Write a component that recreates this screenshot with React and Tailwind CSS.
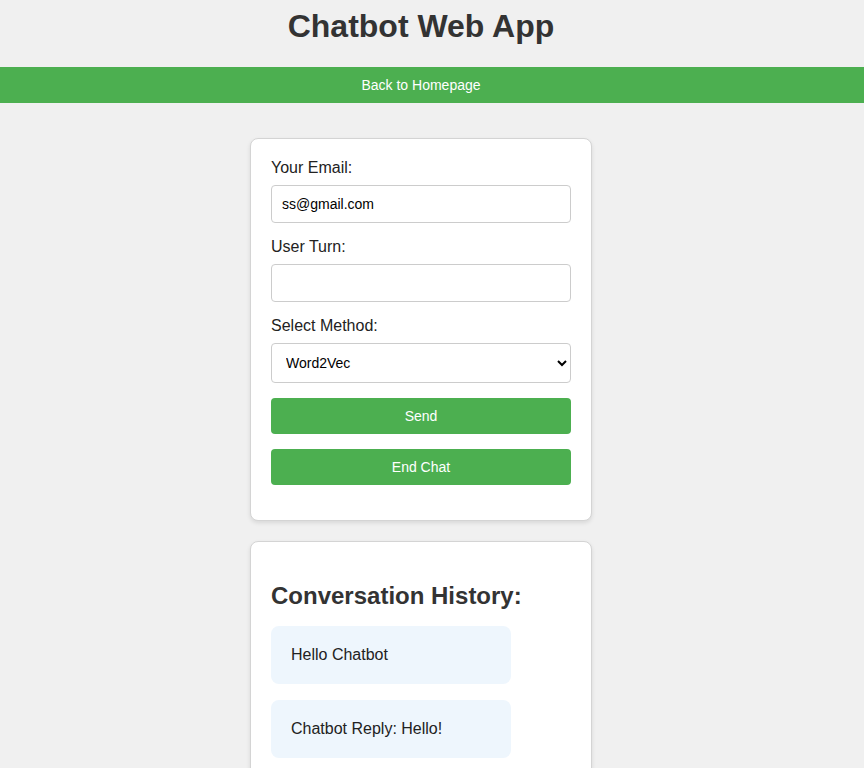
export default function App() {
  return (
    <div className="min-h-screen bg-[#f0f0f0] font-['Liberation_Sans',Arial,sans-serif] text-[#222]">
      <div className="w-[842px] pt-2">
        <h1 className="text-center text-[32px] font-bold leading-[37px] text-[#333]">Chatbot Web App</h1>
      </div>
      <div className="mt-[22px] h-[36px] w-full bg-[#4caf50]">
        <div className="flex h-full w-[842px] items-center justify-center text-[14px] text-white">
          Back to Homepage
        </div>
      </div>
      <div className="flex w-[842px] flex-col items-center pt-[35px] pb-10">
        <div className="w-[342px] rounded-lg border border-[#d4d4d4] bg-white p-5 shadow-[0_2px_4px_rgba(0,0,0,0.1)]">
          <label className="mb-2 block text-[16px] leading-[18px]">Your Email:</label>
          <input
            className="mb-[15px] block h-[38px] w-full rounded border border-[#ccc] px-[10px] text-[14px] text-black outline-none"
            defaultValue="ss@gmail.com"
          />
          <label className="mb-2 block text-[16px] leading-[18px]">User Turn:</label>
          <input className="mb-[15px] block h-[38px] w-full rounded border border-[#ccc] px-[10px] text-[14px] outline-none" />
          <label className="mb-2 block text-[16px] leading-[18px]">Select Method:</label>
          <select className="mb-[15px] block h-[40px] w-full rounded border border-[#ccc] bg-white px-[10px] text-[14px] text-black outline-none">
            <option>Word2Vec</option>
          </select>
          <button className="mb-[15px] block h-[36px] w-full rounded bg-[#4caf50] text-[14px] text-white">Send</button>
          <button className="mb-[15px] block h-[36px] w-full rounded bg-[#4caf50] text-[14px] text-white">End Chat</button>
        </div>
        <div className="mt-5 w-[342px] rounded-lg border border-[#d4d4d4] bg-white p-5 shadow-[0_2px_4px_rgba(0,0,0,0.1)]">
          <h2 className="mt-5 mb-4 text-[24px] font-bold leading-[28px] text-[#333]">Conversation History:</h2>
          <div className="mb-4 w-[240px] rounded-lg bg-[#eef6fd] p-5 text-[16px] leading-[18px]">Hello Chatbot</div>
          <div className="mb-4 w-[240px] rounded-lg bg-[#eef6fd] p-5 text-[16px] leading-[18px]">Chatbot Reply: Hello!</div>
        </div>
      </div>
    </div>
  );
}
